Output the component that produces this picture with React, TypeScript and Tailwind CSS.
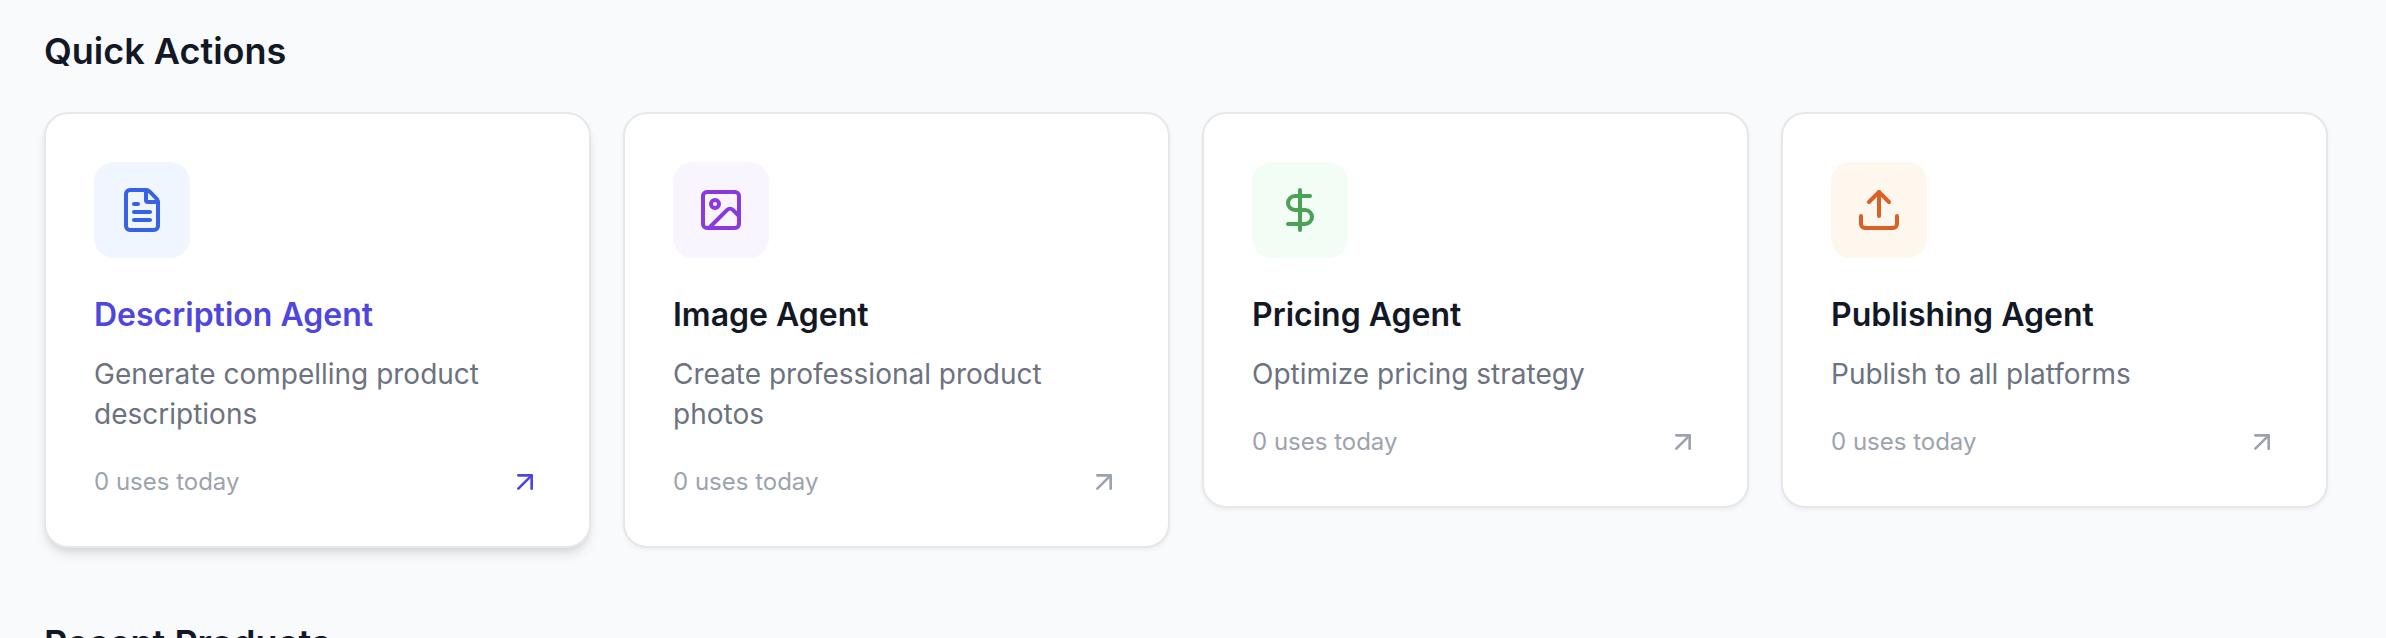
import { ArrowUpRight, DollarSign, FileText, Image as ImageIcon, Upload, type LucideIcon } from "lucide-react";

type Agent = {
  title: string;
  description: string;
  icon: LucideIcon;
  tile: string;
  active?: boolean;
};

const agents: Agent[] = [
  {
    title: "Description Agent",
    description: "Generate compelling product descriptions",
    icon: FileText,
    tile: "bg-[#eff6ff] text-[#3662e3]",
    active: true,
  },
  {
    title: "Image Agent",
    description: "Create professional product photos",
    icon: ImageIcon,
    tile: "bg-[#f9f5ff] text-[#8a38e0]",
  },
  {
    title: "Pricing Agent",
    description: "Optimize pricing strategy",
    icon: DollarSign,
    tile: "bg-[#f2fdf5] text-[#4ba154]",
  },
  {
    title: "Publishing Agent",
    description: "Publish to all platforms",
    icon: Upload,
    tile: "bg-[#fef7ee] text-[#db6027]",
  },
];

function AgentCard({ title, description, icon: Icon, tile, active }: Agent) {
  return (
    <button
      type="button"
      className={`rounded-3xl border-2 border-[#e5e7eb] bg-white p-12 text-left ${
        active
          ? "shadow-[0_8px_12px_-2px_rgba(0,0,0,0.1),0_4px_8px_-4px_rgba(0,0,0,0.1)]"
          : "shadow-[0_2px_4px_0_rgba(0,0,0,0.05)]"
      }`}
    >
      <div className={`mb-8 flex size-24 items-center justify-center rounded-[20px] ${tile}`}>
        <Icon className="size-12" strokeWidth={2} />
      </div>
      <h3 className={`mb-3.5 text-[32px] leading-[50px] font-semibold ${active ? "text-[#4f46de]" : "text-[#131826]"}`}>
        {title}
      </h3>
      <p className="mb-8 text-[28px] leading-10 text-[#6c727f]">{description}</p>
      <div className="flex items-center justify-between">
        <span className="text-2xl leading-8 text-[#9da3ae]">0 uses today</span>
        <ArrowUpRight className={`size-8 ${active ? "text-[#4f46de]" : "text-[#9da3ae]"}`} />
      </div>
    </button>
  );
}

export default function App() {
  return (
    <main className="h-screen overflow-hidden bg-[#f9fafc] pt-6 pr-[58px] pl-11 font-[Inter,sans-serif]">
      <section className="mb-[68px]">
        <h2 className="mb-[34px] text-4xl leading-[54px] font-semibold text-[#131826]">Quick Actions</h2>
        <div className="grid grid-cols-4 items-start gap-8">
          {agents.map((agent) => (
            <AgentCard key={agent.title} {...agent} />
          ))}
        </div>
      </section>
      <section>
        <h2 className="text-4xl leading-[54px] font-semibold text-[#131826]">Recent Products</h2>
      </section>
    </main>
  );
}
